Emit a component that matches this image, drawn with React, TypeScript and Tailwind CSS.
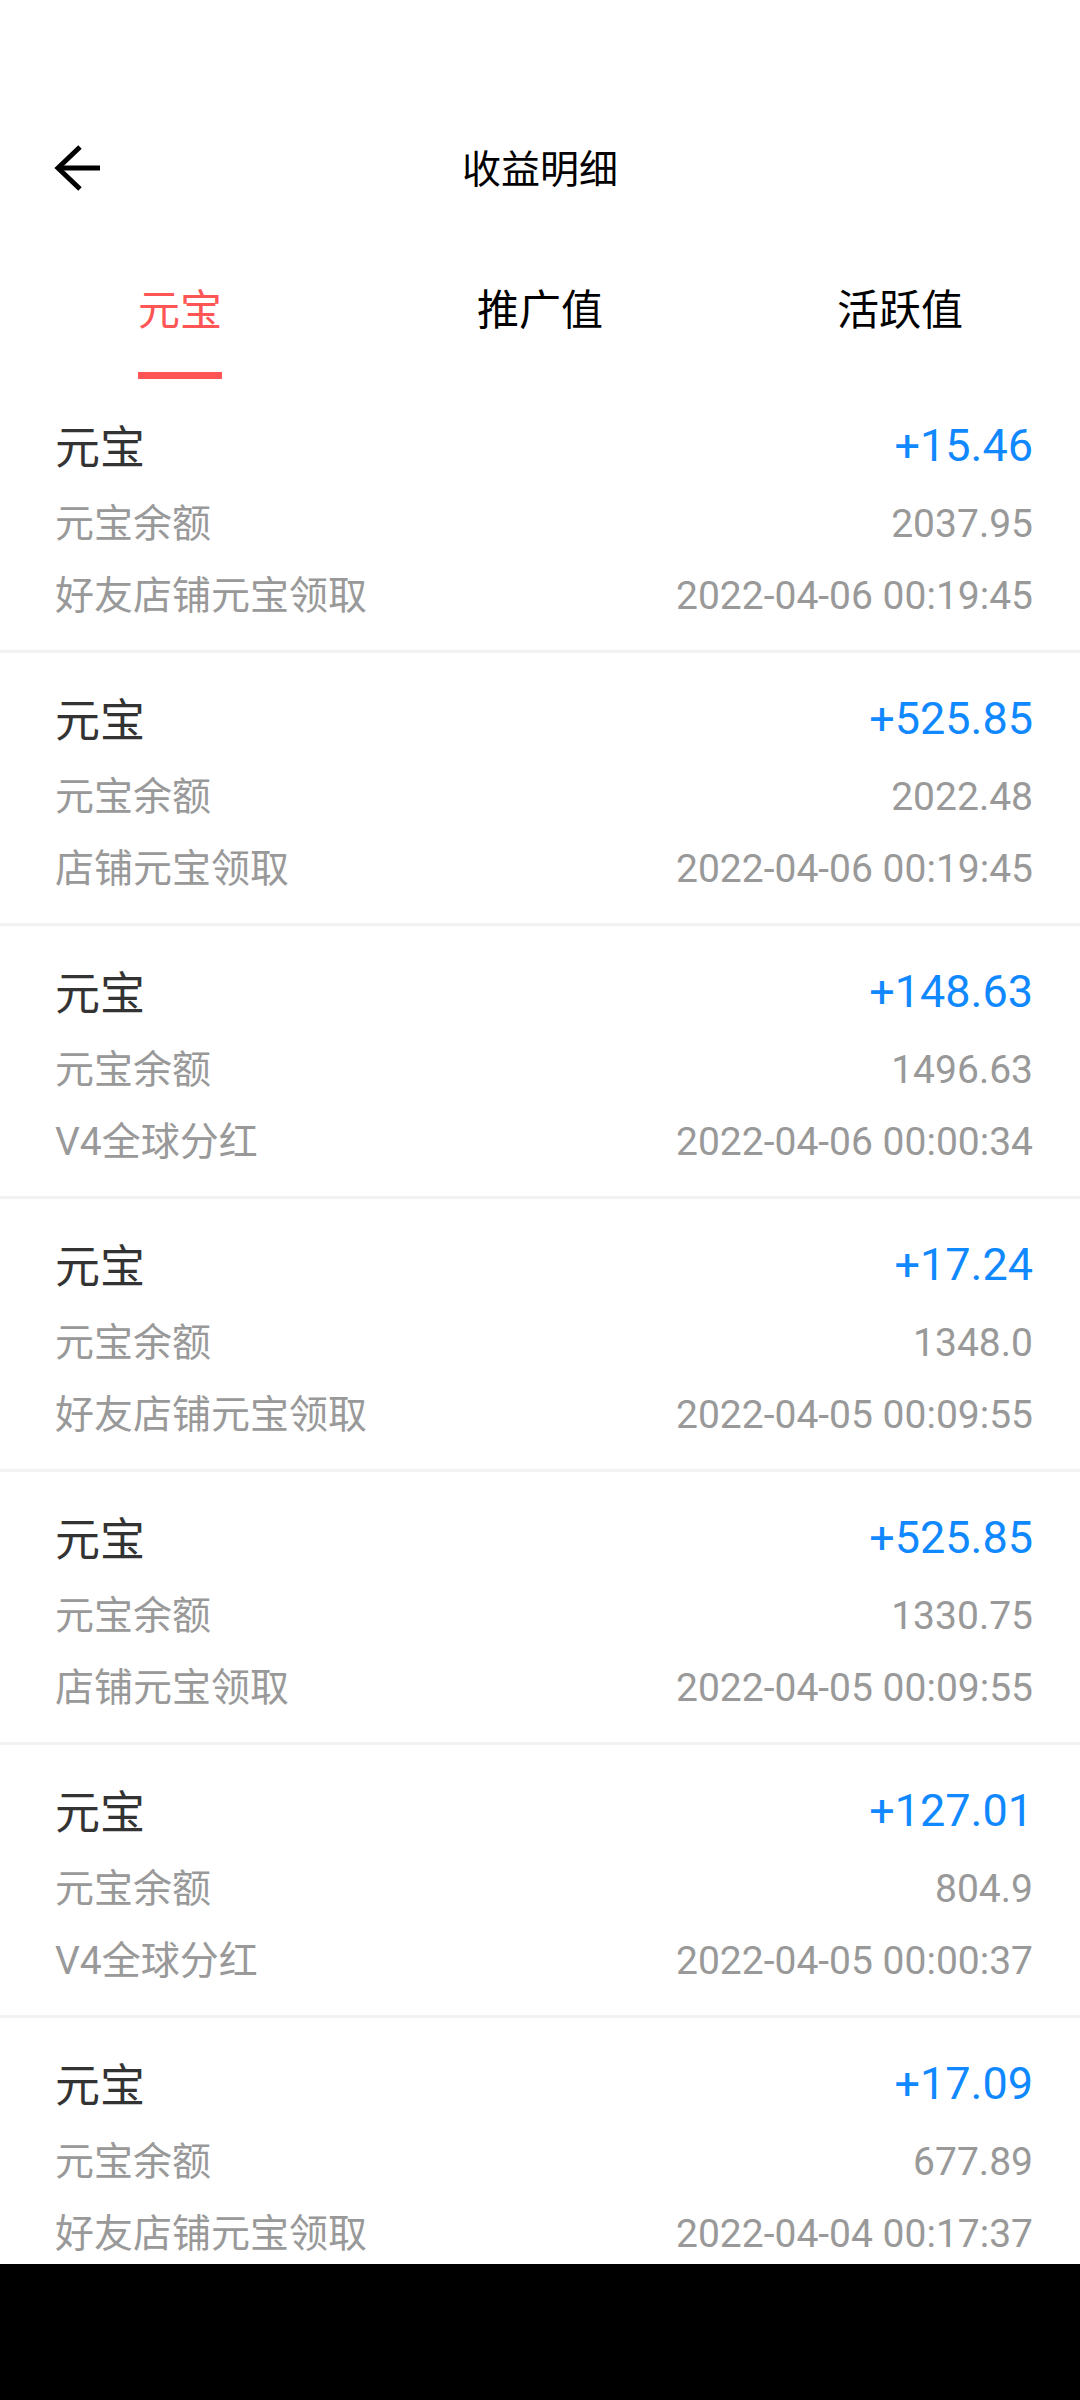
import React from "react";

type Item = { amount: string; balance: string; desc: string; time: string };

const items: Item[] = [
  { amount: "+15.46", balance: "2037.95", desc: "好友店铺元宝领取", time: "2022-04-06 00:19:45" },
  { amount: "+525.85", balance: "2022.48", desc: "店铺元宝领取", time: "2022-04-06 00:19:45" },
  { amount: "+148.63", balance: "1496.63", desc: "V4全球分红", time: "2022-04-06 00:00:34" },
  { amount: "+17.24", balance: "1348.0", desc: "好友店铺元宝领取", time: "2022-04-05 00:09:55" },
  { amount: "+525.85", balance: "1330.75", desc: "店铺元宝领取", time: "2022-04-05 00:09:55" },
  { amount: "+127.01", balance: "804.9", desc: "V4全球分红", time: "2022-04-05 00:00:37" },
  { amount: "+17.09", balance: "677.89", desc: "好友店铺元宝领取", time: "2022-04-04 00:17:37" },
];

function BackArrow() {
  return (
    <svg width="48" height="46" viewBox="0 0 48 46" fill="none">
      <path d="M4 23 H46" stroke="#000" strokeWidth="5" />
      <path d="M26 2 L4 23 L26 44" stroke="#000" strokeWidth="5" strokeLinejoin="miter" />
    </svg>
  );
}

export default function App() {
  const tabs = ["元宝", "推广值", "活跃值"];
  return (
    <div className="w-[1080px] h-[2400px] bg-white flex flex-col overflow-hidden font-['Roboto','Noto_Sans_CJK_SC',sans-serif]">
      <div className="h-[112px] shrink-0" />
      <div className="h-[112px] shrink-0 relative flex items-center justify-center">
        <div className="absolute left-[54px] top-[33px]">
          <BackArrow />
        </div>
        <span className="text-[39px] leading-[50px] text-black mt-[4px]">收益明细</span>
      </div>
      <div className="h-[156px] shrink-0 grid grid-cols-3">
        {tabs.map((t, i) => (
          <div key={t} className="flex flex-col items-center pt-[65px]">
            <span className={`text-[42px] leading-[44px] ${i === 0 ? "text-[#ff5555]" : "text-black"}`}>{t}</span>
            {i === 0 ? (
              <div className="mt-[39px] h-[7px] w-[84px] bg-[#ff5555]" />
            ) : null}
          </div>
        ))}
      </div>
      <div className="flex-1 overflow-hidden flex flex-col">
        {items.map((it, idx) => (
          <div key={idx} className="shrink-0 flex flex-col">
            <div className="h-[270px] flex flex-col pl-[55px] pr-[47px] pt-[39px]">
              <div className="h-[60px] flex items-center justify-between">
                <span className="text-[45px] leading-[60px] text-[#333333]">元宝</span>
                <span className="text-[45px] leading-[60px] text-[#1088ff] mb-[6px]">{it.amount}</span>
              </div>
              <div className="h-[60px] mt-[15px] flex items-center justify-between">
                <span className="text-[39px] leading-[60px] text-[#999999]">元宝余额</span>
                <span className="text-[39px] leading-[60px] text-[#999999]">{it.balance}</span>
              </div>
              <div className="h-[60px] mt-[12px] flex items-center justify-between">
                <span className="text-[39px] leading-[60px] text-[#999999]">{it.desc}</span>
                <span className="text-[39px] leading-[60px] text-[#999999]">{it.time}</span>
              </div>
            </div>
            <div className="h-[3px] bg-[#f2f2f2]" />
          </div>
        ))}
      </div>
      <div className="h-[136px] shrink-0 bg-black" />
    </div>
  );
}
